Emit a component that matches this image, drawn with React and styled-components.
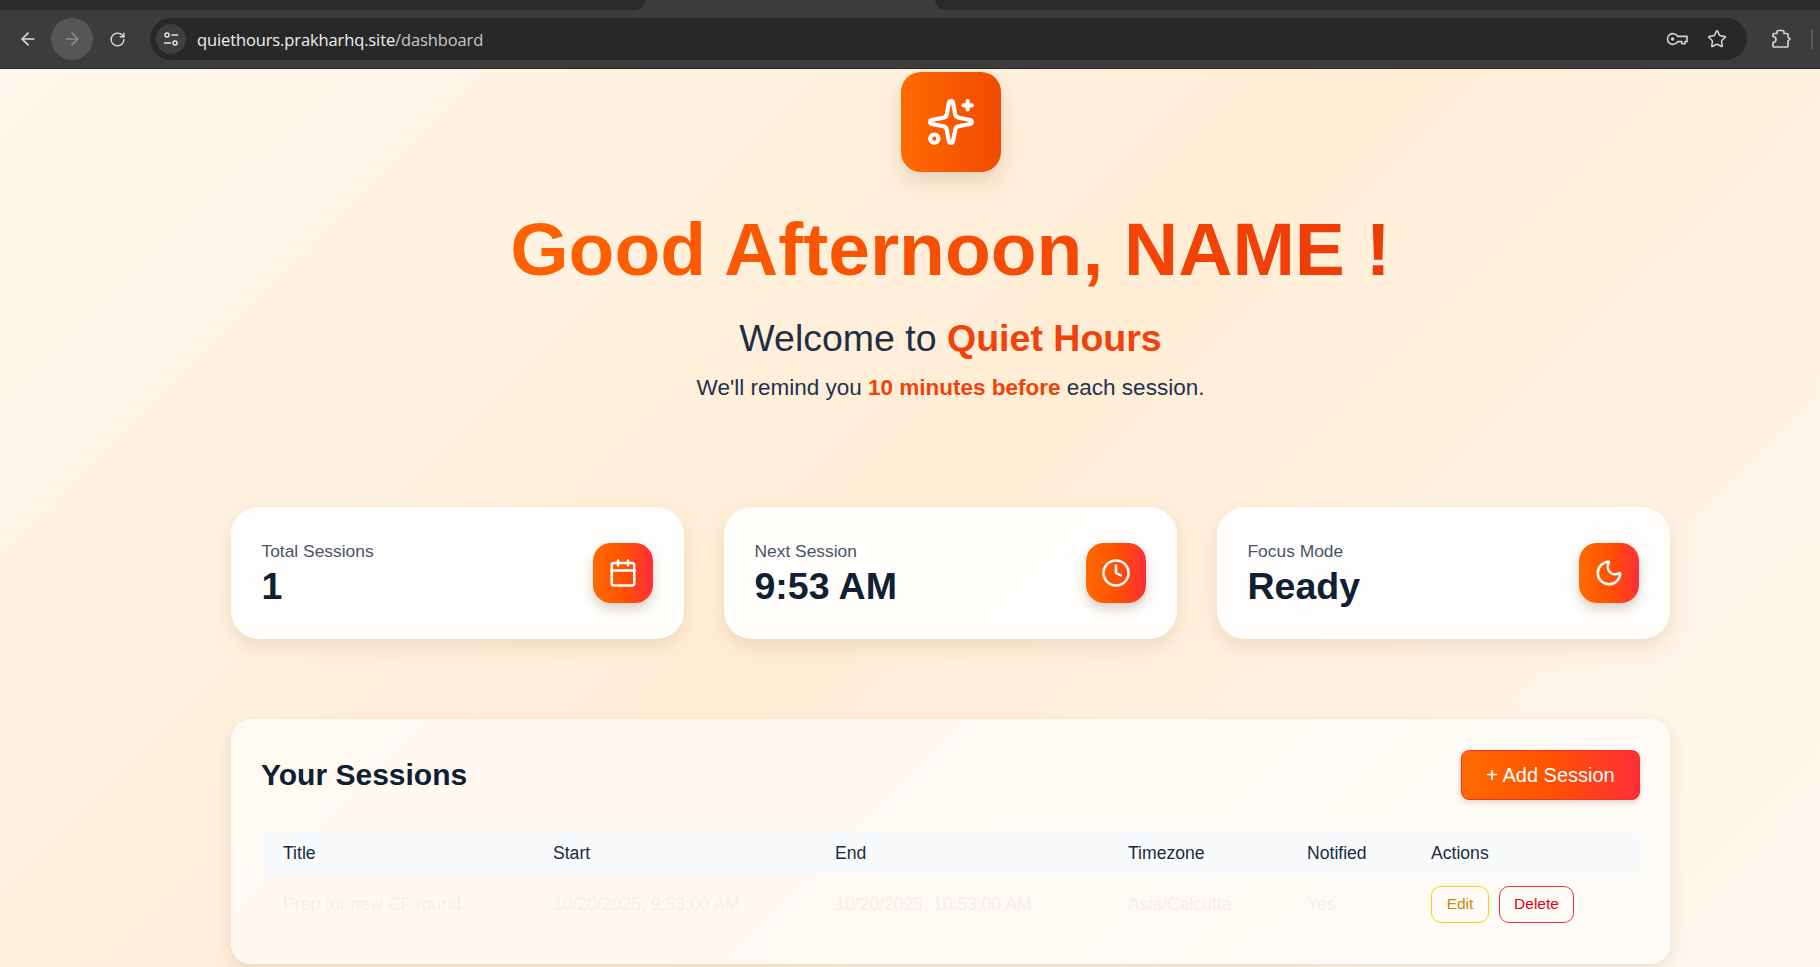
import React from 'react';
import styled, { createGlobalStyle } from 'styled-components';
import { ArrowLeft, ArrowRight, RotateCw, Star, Calendar, Clock, Moon, Sparkles } from 'lucide-react';

const GlobalStyle = createGlobalStyle`
  html, body { margin: 0; padding: 0; height: 100%; overflow: hidden; }
  body { font-family: "Liberation Sans", Arial, sans-serif; }
  * { box-sizing: border-box; }
`;

const Frame = styled.div`
  height: 967px;
  display: flex;
  flex-direction: column;
  overflow: hidden;
`;

const TabStrip = styled.div`
  height: 10px;
  flex: none;
  display: flex;
  background: #3c3c3c;
`;

const TabEdge = styled.div`
  background: #2a2a2a;
  height: 10px;
  width: ${p => p.$width};
  flex: ${p => (p.$grow ? 1 : 'none')};
  border-radius: ${p => p.$radius};
`;

const TabGap = styled.div`
  width: 290px;
  flex: none;
`;

const Toolbar = styled.div`
  height: 59px;
  flex: none;
  display: flex;
  align-items: center;
  padding: 0 0 0 7px;
  background: #3c3c3c;
  border-bottom: 1px solid #25292b;
  color: #d6d6d6;
`;

const NavButton = styled.div`
  width: 42px;
  height: 42px;
  margin-right: ${p => p.$gap || 0}px;
  border-radius: 50%;
  display: flex;
  align-items: center;
  justify-content: center;
  flex: none;
  background: ${p => (p.$active ? '#565656' : 'transparent')};
  color: ${p => (p.$active ? '#8f8f8f' : '#dcdcdc')};
`;

const AddressBar = styled.div`
  width: 1597px;
  height: 42px;
  flex: none;
  margin-left: 12px;
  padding: 0 20px 0 6px;
  display: flex;
  align-items: center;
  background: #282828;
  border-radius: 21px;
`;

const SiteBadge = styled.div`
  width: 30px;
  height: 30px;
  flex: none;
  border-radius: 50%;
  background: #3f3f3f;
  display: flex;
  align-items: center;
  justify-content: center;
`;

const Url = styled.div`
  margin-left: 11px;
  flex: 1;
  font-family: "Open Sans", "Noto Sans", sans-serif;
  font-size: 16.5px;
  letter-spacing: -0.12px;
  color: #c8c8c8;
  span { color: #f0f0f0; }
`;

const BarIcons = styled.div`
  display: flex;
  align-items: center;
  gap: 19px;
  color: #d4d4d4;
`;

const ExtensionSlot = styled.div`
  margin-left: 24px;
  display: flex;
  align-items: center;
  color: #d4d4d4;
`;

const Divider = styled.div`
  width: 2px;
  height: 20px;
  margin-left: 20px;
  background: #5a5a5a;
`;

const Page = styled.main`
  flex: 1;
  min-height: 0;
  padding: 3px 150px 0 231px;
  background: linear-gradient(135deg, #fff7ed 0%, #ffedd5 50%, #fff8f0 100%);
`;

const Hero = styled.header`
  display: flex;
  flex-direction: column;
  align-items: center;
`;

const Logo = styled.div`
  width: 100px;
  height: 100px;
  border-radius: 20px;
  display: flex;
  align-items: center;
  justify-content: center;
  color: #fff;
  background: linear-gradient(90deg, #ff6a00, #f04a00);
  box-shadow: 0 10px 20px rgba(120, 70, 20, 0.16);
`;

const Headline = styled.h1`
  margin: 37px 0 0;
  font-size: 75px;
  line-height: 80px;
  font-weight: 700;
  background: linear-gradient(90deg, #ff6300, #ee3a08);
  -webkit-background-clip: text;
  background-clip: text;
  color: transparent;
`;

const Welcome = styled.h2`
  margin: 27px 0 0;
  font-size: 37.5px;
  line-height: 44px;
  font-weight: 400;
  color: #1e2f45;
`;

const Accent = styled.strong`
  font-weight: 700;
  color: #f0420a;
`;

const Reminder = styled.p`
  margin: 12px 0 0;
  font-size: 22.5px;
  line-height: 32px;
  color: #1e3350;
`;

const Stats = styled.section`
  margin-top: 103px;
  display: grid;
  grid-template-columns: repeat(3, 1fr);
  gap: 40px;
`;

const StatCard = styled.article`
  height: 132px;
  padding: 0 31px 0 30.5px;
  display: flex;
  align-items: center;
  justify-content: space-between;
  border-radius: 28px;
  background: rgba(255, 255, 255, 0.9);
  box-shadow: 0 8px 20px rgba(120, 80, 30, 0.13);
`;

const StatLabel = styled.div`
  font-size: 17.4px;
  line-height: 20px;
  margin-bottom: 5px;
  color: #475569;
`;

const StatValue = styled.div`
  font-size: 37.5px;
  line-height: 40px;
  font-weight: 700;
  color: #0f2035;
`;

const StatIcon = styled.div`
  width: 60px;
  height: 60px;
  border-radius: 18px;
  display: flex;
  align-items: center;
  justify-content: center;
  color: #fff;
  background: linear-gradient(90deg, #ff6a00, #ff5200 50%, #ff2e38);
  box-shadow: 0 6px 12px rgba(90, 50, 20, 0.22);
`;

const Panel = styled.section`
  margin-top: 80px;
  height: 245px;
  padding: 31px 30px 0;
  border-radius: 20px;
  background: rgba(255, 255, 255, 0.64);
  box-shadow: 0 6px 16px rgba(120, 80, 30, 0.14);
`;

const PanelHead = styled.div`
  display: flex;
  align-items: center;
  justify-content: space-between;
  margin-bottom: 31px;
`;

const PanelTitle = styled.h3`
  margin: 0;
  font-size: 30px;
  font-weight: 700;
  color: #0f2035;
`;

const AddButton = styled.button`
  width: 179px;
  height: 50px;
  border: 1px solid #ff2a2a;
  border-radius: 8px;
  font: 20px "Liberation Sans", Arial, sans-serif;
  color: #fff;
  background: linear-gradient(90deg, #ff6a00, #ff5200 50%, #ff2e38);
  box-shadow: 0 3px 6px rgba(120, 60, 20, 0.18);
`;

const Table = styled.div`
  display: grid;
  grid-template-columns: 292px 282px 293px 179px 124px 1fr;
`;

const HeadCell = styled.div`
  height: 45px;
  padding-left: ${p => (p.$first ? 22 : 0)}px;
  display: flex;
  align-items: center;
  font-size: 17.6px;
  color: #1b2a44;
  background: #f8fafc;
  border-radius: ${p => p.$radius || 0};
`;

const RowCell = styled.div`
  height: 56px;
  padding-left: ${p => (p.$first ? 22 : 0)}px;
  display: flex;
  align-items: center;
  gap: 10px;
  font-size: 17.6px;
  color: #f2f0ec;
`;

const ActionButton = styled.button`
  height: 37px;
  width: ${p => p.$width}px;
  padding: 0;
  border-radius: 10px;
  font: 15.5px "Liberation Sans", Arial, sans-serif;
  background: transparent;
  color: ${p => p.$text};
  border: 1px solid ${p => p.$line};
`;

const columns = ['Title', 'Start', 'End', 'Timezone', 'Notified', 'Actions'];
const row = ['Prep for new CF round', '10/20/2025, 9:53:00 AM', '10/20/2025, 10:53:00 AM', 'Asia/Calcutta', 'Yes'];

const stats = [
  { label: 'Total Sessions', value: '1', Icon: Calendar },
  { label: 'Next Session', value: '9:53 AM', Icon: Clock },
  { label: 'Focus Mode', value: 'Ready', Icon: Moon },
];

function TuneIcon() {
  return (
    <svg width="16" height="16" viewBox="0 0 16 16" fill="none" stroke="#e4e4e4" strokeWidth="1.5">
      <circle cx="4" cy="4" r="2" />
      <path d="M8.5 4H15M1 12h7" />
      <circle cx="12" cy="12" r="2" />
    </svg>
  );
}

function KeyIcon() {
  return (
    <svg width="22" height="14" viewBox="0 0 22 14" fill="none" stroke="currentColor" strokeWidth="1.6">
      <path d="M11.6 4.4H21v5.2h-2v2.2h-3.2V9.6h-4.2a5.4 5.4 0 1 1 0-5.2z" strokeLinejoin="round" />
      <circle cx="6.6" cy="7" r="1.7" fill="currentColor" stroke="none" />
    </svg>
  );
}

function ExtensionIcon() {
  return (
    <svg width="20" height="20" viewBox="0 0 20 20" fill="none" stroke="currentColor" strokeWidth="1.7" strokeLinejoin="round">
      <path d="M3 4.5h3V3a1.5 1.5 0 0 1 1.5-1.5h4A1.5 1.5 0 0 1 13 3v1.5h3a1 1 0 0 1 1 1V8l2 2-2 2v5a1 1 0 0 1-1 1H3a1 1 0 0 1-1-1v-3.5a3 3 0 0 0 0-6V5.5a1 1 0 0 1 1-1z" />
    </svg>
  );
}

function App() {
  return (
    <Frame>
      <GlobalStyle />
      <TabStrip>
        <TabEdge $width="645px" $radius="0 0 12px 0" />
        <TabGap />
        <TabEdge $grow $radius="0 0 0 12px" />
      </TabStrip>
      <Toolbar>
        <NavButton $gap={2}><ArrowLeft size={20} /></NavButton>
        <NavButton $gap={3} $active><ArrowRight size={20} /></NavButton>
        <NavButton><RotateCw size={17} /></NavButton>
        <AddressBar>
          <SiteBadge><TuneIcon /></SiteBadge>
          <Url><span>quiethours.prakharhq.site</span>/dashboard</Url>
          <BarIcons>
            <KeyIcon />
            <Star size={20} strokeWidth={1.8} />
          </BarIcons>
        </AddressBar>
        <ExtensionSlot>
          <ExtensionIcon />
          <Divider />
        </ExtensionSlot>
      </Toolbar>
      <Page>
        <Hero>
          <Logo><Sparkles size={50} strokeWidth={2} /></Logo>
          <Headline>Good Afternoon, NAME !</Headline>
          <Welcome>Welcome to <Accent>Quiet Hours</Accent></Welcome>
          <Reminder>We'll remind you <Accent>10 minutes before</Accent> each session.</Reminder>
        </Hero>
        <Stats>
          {stats.map(({ label, value, Icon }) => (
            <StatCard key={label}>
              <div>
                <StatLabel>{label}</StatLabel>
                <StatValue>{value}</StatValue>
              </div>
              <StatIcon><Icon size={30} strokeWidth={2} /></StatIcon>
            </StatCard>
          ))}
        </Stats>
        <Panel>
          <PanelHead>
            <PanelTitle>Your Sessions</PanelTitle>
            <AddButton>+ Add Session</AddButton>
          </PanelHead>
          <Table>
            {columns.map((c, i) => (
              <HeadCell
                key={c}
                $first={i === 0}
                $radius={i === 0 ? '8px 0 0 0' : i === columns.length - 1 ? '0 8px 0 0' : undefined}
              >
                {c}
              </HeadCell>
            ))}
            {row.map((c, i) => (
              <RowCell key={c} $first={i === 0}>{c}</RowCell>
            ))}
            <RowCell>
              <ActionButton $width={58} $text="#ca8a04" $line="#facc15">Edit</ActionButton>
              <ActionButton $width={75} $text="#e7000b" $line="#ff2a3c">Delete</ActionButton>
            </RowCell>
          </Table>
        </Panel>
      </Page>
    </Frame>
  );
}

export default App;
